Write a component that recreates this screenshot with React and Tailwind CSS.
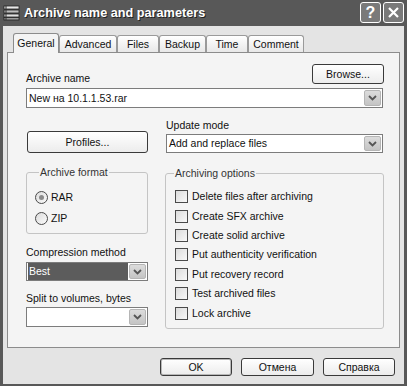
import React from "react";

const font = { fontFamily: '"Liberation Sans", Arial, sans-serif' };

// Pfeil-Taste der Combobox
const DropBtn = ({ h = 17 }) => (
  <div className="w-[17px] flex items-center justify-center bg-gradient-to-b from-[#dcdcdc] to-[#c4c4c4] border border-[#b5b5b5] rounded-[2px]" style={{ height: h }}>
    <svg width="9" height="6" viewBox="0 0 9 6">
      <polyline points="1,1 4.5,4.5 8,1" fill="none" stroke="#555" strokeWidth="1.8" />
    </svg>
  </div>
);

const Combo = ({ text, width, h = 20, selected }) => (
  <div className="flex items-center bg-white border border-[#7c7c7c] pl-[1px] pr-[1px] gap-[1px]" style={{ width, height: h }}>
    <div className={`flex-1 h-full flex items-center pl-[1px] ${selected ? "bg-[#5c5c5c] text-white" : ""}`}>{text}</div>
    <DropBtn h={h - 4} />
  </div>
);

const Button = ({ children, className = "", def }) => (
  <div className={`flex items-center justify-center rounded-[3px] border border-[#3a3a3a] bg-gradient-to-b from-white to-[#ececec] ${def ? "shadow-[inset_0_0_0_1px_#b8b8b8]" : ""} ${className}`}>
    {children}
  </div>
);

const Check = ({ label }) => (
  <div className="flex items-center h-[19.4px]">
    <div className="w-[13px] h-[13px] border border-[#4a4a4a] bg-gradient-to-br from-[#dcdcdc] to-[#f8f8f8]" />
    <span className="ml-[4px]">{label}</span>
  </div>
);

const Radio = ({ label, on }) => (
  <div className="flex items-center h-[21px]">
    <div className="w-[13px] h-[13px] rounded-full border border-[#4a4a4a] bg-gradient-to-br from-[#dcdcdc] to-[#fafafa] flex items-center justify-center">
      {on && <div className="w-[5px] h-[5px] rounded-full bg-[#8a8a8a]" />}
    </div>
    <span className="ml-[3px]">{label}</span>
  </div>
);

const tabs = ["General", "Advanced", "Files", "Backup", "Time", "Comment"];
const tabW = [46, 58, 42, 47, 42, 56];

const options = [
  "Delete files after archiving",
  "Create SFX archive",
  "Create solid archive",
  "Put authenticity verification",
  "Put recovery record",
  "Test archived files",
  "Lock archive",
];

export default function App() {
  return (
    <div className="w-[407px] h-[386px] bg-[#585858] flex flex-col text-[10.5px] leading-[13px] text-[#111]" style={font}>
      {/* Titelleiste */}
      <div className="h-[26px] flex items-center pl-[3px] pr-[3px] shrink-0">
        <svg width="18" height="16" viewBox="0 0 18 16" className="mr-[2px]">
          <rect x="1" y="1" width="15" height="3" fill="#e8e8e8" stroke="#222" strokeWidth="0.8" />
          <rect x="1" y="5" width="15" height="3" fill="#bdbdbd" stroke="#222" strokeWidth="0.8" />
          <rect x="1" y="9" width="15" height="3" fill="#e0e0e0" stroke="#222" strokeWidth="0.8" />
          <rect x="1" y="12.5" width="15" height="2.5" fill="#9a9a9a" stroke="#222" strokeWidth="0.8" />
          <line x1="3" y1="1" x2="3" y2="15" stroke="#333" strokeWidth="1" />
        </svg>
        <span className="text-white font-bold text-[12.7px] ml-[1px] [text-shadow:1px_1px_0_#222]">Archive name and parameters</span>
        <div className="ml-auto flex gap-[2px] mt-[-1px]">
          <div className="w-[21px] h-[21px] rounded-[3px] border border-white bg-[#7a7a7a] flex items-center justify-center text-white font-bold text-[16px]">?</div>
          <div className="w-[21px] h-[21px] rounded-[3px] border border-white bg-[#7a7a7a] flex items-center justify-center">
            <svg width="13" height="13" viewBox="0 0 13 13">
              <path d="M2 2 L11 11 M11 2 L2 11" stroke="white" strokeWidth="2.2" />
            </svg>
          </div>
        </div>
      </div>

      {/* Dialogkörper */}
      <div className="flex-1 bg-[#e4e4e4] mx-[3px] mb-[2px] px-[4px] pt-[7px] flex flex-col">
        <div className="flex items-end ml-[6px] h-[19px]">
          {tabs.map((t, i) =>
            i === 0 ? (
              <div key={t} className="h-[20px] mb-[-1px] z-10 bg-[#f4f4f4] border border-b-0 border-[#8c8c8c] rounded-t-[3px] flex items-center justify-center" style={{ width: tabW[i] }}>
                {t}
              </div>
            ) : (
              <div key={t} className="h-[17px] bg-gradient-to-b from-white to-[#e8e8e8] border border-b-0 border-[#9a9a9a] rounded-t-[3px] flex items-center justify-center" style={{ width: tabW[i] }}>
                {t}
              </div>
            )
          )}
        </div>

        {/* Reiter-Inhalt */}
        <div className="h-[296px] bg-[#f4f4f4] border border-[#8c8c8c] pl-[18px] pr-[15px] flex flex-col">
          <div className="flex items-end justify-between mt-[11px]">
            <span className="mb-[-1px]">Archive name</span>
            <Button className="w-[72px] h-[20px]">Browse...</Button>
          </div>
          <div className="mt-[4px]">
            <Combo text="New на 10.1.1.53.rar" width={357} />
          </div>

          <div className="flex mt-[11px]">
            <div className="w-[122px] flex flex-col justify-end">
              <Button className="w-[121px] h-[22px] ml-[1px]">Profiles...</Button>
            </div>
            <div className="ml-[18px] flex flex-col">
              <span>Update mode</span>
              <div className="mt-[2px]">
                <Combo text="Add and replace files" width={217} h={19} />
              </div>
            </div>
          </div>

          <div className="flex mt-[19px]">
            <div className="w-[122px] flex flex-col">
              <fieldset className="border border-[#c4c4c4] rounded-[3px] pl-[8px] h-[68px] mt-[-6px]">
                <legend className="ml-[4px] px-[1px] text-[#333]">Archive format</legend>
                <div className="mt-[8px]">
                  <Radio label="RAR" on />
                  <Radio label="ZIP" />
                </div>
              </fieldset>
              <span className="mt-[12px]">Compression method</span>
              <div className="mt-[3px]">
                <Combo text="Best" width={122} h={19} selected />
              </div>
              <span className="mt-[11px]">Split to volumes, bytes</span>
              <div className="mt-[2px]">
                <Combo text="" width={122} h={20} />
              </div>
            </div>
            <fieldset className="ml-[17px] w-[227px] h-[162px] mt-[-5px] border border-[#c4c4c4] rounded-[3px] pl-[9px]">
              <legend className="ml-[-1px] px-[1px] text-[#333]">Archiving options</legend>
              <div className="mt-[7px]">
                {options.map((o) => (
                  <Check key={o} label={o} />
                ))}
              </div>
            </fieldset>
          </div>
        </div>

        <div className="flex justify-end gap-[9px] mt-[10px] pr-[5px]">
          <Button className="w-[72px] h-[18px]" def>OK</Button>
          <Button className="w-[73px] h-[18px]">Отмена</Button>
          <Button className="w-[72px] h-[18px]">Справка</Button>
        </div>
      </div>
    </div>
  );
}
